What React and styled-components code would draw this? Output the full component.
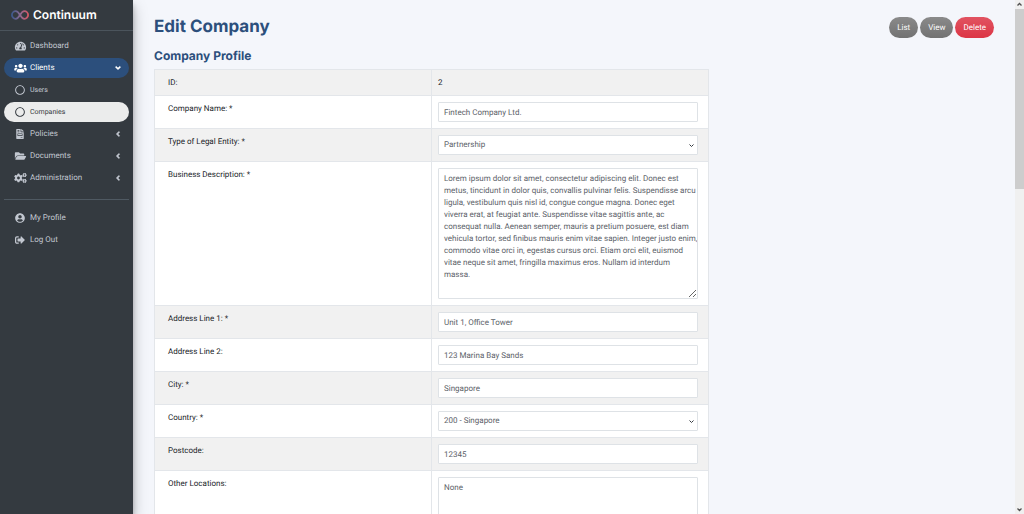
import styled, { createGlobalStyle } from 'styled-components';
import {
  FaTachometerAlt,
  FaUsers,
  FaRegCircle,
  FaFileInvoice,
  FaFolderOpen,
  FaCogs,
  FaUserCircle,
  FaSignOutAlt,
  FaAngleLeft,
  FaAngleDown,
} from 'react-icons/fa';

const GlobalStyle = createGlobalStyle`
  *,
  *::before,
  *::after {
    box-sizing: border-box;
  }

  body {
    margin: 0;
    background: #f4f6fb;
    color: #212529;
    font-family: Roboto, "Liberation Sans", sans-serif;
    font-size: 8px;
    line-height: 12px;
    text-rendering: geometricPrecision;
  }
`;

const Layout = styled.div`
  display: flex;
  height: 100vh;
  overflow: hidden;
`;

const Sidebar = styled.aside`
  flex: none;
  width: 133px;
  background: #343a40;
  box-shadow: 0 7px 14px rgba(0, 0, 0, 0.25), 0 5px 5px rgba(0, 0, 0, 0.22);
`;

const Brand = styled.a`
  display: flex;
  align-items: center;
  gap: 4px;
  height: 31px;
  padding-left: 11px;
  border-bottom: 1px solid #4b545c;
  color: #fff;
  font-family: Inter, "Open Sans", sans-serif;
  font-size: 12px;
  font-weight: 600;
  text-decoration: none;
`;

const Menu = styled.nav`
  display: flex;
  flex-direction: column;
  gap: 2px;
  padding: 5px 4px;
`;

const MenuLink = styled.a`
  display: flex;
  align-items: center;
  height: 20px;
  padding: 0 7px 0 10px;
  border-radius: 10px;
  background: ${({ $variant }) =>
    ({ open: '#2c4f7c', current: '#ebecec' })[$variant] || 'transparent'};
  color: ${({ $variant }) =>
    ({ open: '#fff', current: '#343a40' })[$variant] || '#c2c7d0'};
  font-size: ${({ $sub }) => ($sub ? '7px' : '8px')};
  text-decoration: none;
`;

const MenuIcon = styled.span`
  display: flex;
  justify-content: center;
  width: 12px;
  margin-right: 4px;

  svg {
    flex: none;
    width: ${({ $wide }) => ($wide ? '13px' : '10px')};
    height: 10px;
  }
`;

const MenuText = styled.span`
  flex: 1;
`;

const MenuArrow = styled.span`
  display: flex;

  svg {
    width: auto;
    height: 8px;
    stroke: currentColor;
    stroke-width: 30px;
  }
`;

const Divider = styled.hr`
  width: 100%;
  margin: 9px 0 6px;
  border: 0;
  border-top: 1px solid #4f5962;
`;

const Main = styled.main`
  flex: 1;
  padding: 17px 21px;
`;

const PageHeader = styled.header`
  display: flex;
  align-items: center;
  justify-content: space-between;
  height: 21px;
`;

const Title = styled.h1`
  margin: 0;
  color: #2c4f7c;
  font-family: Inter, "Open Sans", sans-serif;
  font-size: 17px;
  font-weight: 700;
  line-height: 21px;
`;

const Subtitle = styled.h2`
  margin: 10px 0 6px;
  color: #2c4f7c;
  font-family: Inter, "Open Sans", sans-serif;
  font-size: 12px;
  font-weight: 700;
  line-height: 15px;
`;

const Actions = styled.div`
  display: flex;
  gap: 2px;
`;

const ActionButton = styled.button`
  height: 21px;
  padding: 0 8px;
  border: 0;
  border-radius: 11px;
  background: ${({ $danger }) =>
    $danger
      ? 'linear-gradient(#e15361, #dc3545)'
      : 'linear-gradient(#8a8a8a, #727272)'};
  color: #fff;
  font: inherit;
  text-rendering: inherit;
  cursor: pointer;
`;

const ProfileTable = styled.table`
  width: 100%;
  max-width: 555px;
  border: 1px solid #e3e6ea;
  border-collapse: collapse;
  table-layout: fixed;
  background: #fff;
`;

const Row = styled.tr`
  &:nth-child(odd) {
    background: #f1f1f1;
  }
`;

const LabelCell = styled.th`
  padding: 7px 13px 6px;
  border: 1px solid #e3e6ea;
  font-weight: 400;
  text-align: left;
  vertical-align: top;
`;

const ValueCell = styled.td`
  padding: 6px 10px 6px 6px;
  border: 1px solid #e3e6ea;
  vertical-align: top;
`;

const PlainValue = styled.div`
  padding-top: 1px;
`;

const Input = styled.input`
  display: block;
  width: 100%;
  height: 20px;
  padding: 0 5px;
  border: 1px solid #dee2e6;
  border-radius: 1px;
  background: #fff;
  color: #5c6269;
  font: inherit;
  text-rendering: inherit;
`;

const SelectWrap = styled.div`
  position: relative;
`;

const Select = styled.select`
  display: block;
  width: 100%;
  height: 20px;
  padding: 0 5px;
  border: 1px solid #dee2e6;
  border-radius: 1px;
  background: #fff;
  color: #5c6269;
  font: inherit;
  text-rendering: inherit;
  appearance: none;
`;

const SelectArrow = styled.svg`
  position: absolute;
  top: 7px;
  right: 3px;
  width: 7px;
  height: 7px;
  fill: none;
  stroke: #343a40;
  pointer-events: none;
`;

const TextArea = styled.textarea`
  display: block;
  width: 100%;
  height: 131px;
  padding: 4px 0 4px 5px;
  border: 1px solid #dee2e6;
  border-radius: 1px;
  background: #fff;
  color: #5c6269;
  font: inherit;
  text-rendering: inherit;
  white-space: pre;
  overflow: hidden;
  resize: vertical;
`;

const ScrollTrack = styled.div`
  display: flex;
  flex: none;
  flex-direction: column;
  align-items: center;
  width: 9px;
  background: #f0f0f0;
`;

const ScrollThumb = styled.div`
  width: 100%;
  height: 35%;
  margin-bottom: auto;
  background: #cdcdcd;
`;

const ScrollArrow = styled.svg`
  flex: none;
  width: 9px;
  height: 9px;
  fill: none;
  stroke: #505050;
  stroke-width: 1.3;
`;

const description = [
  'Lorem ipsum dolor sit amet, consectetur adipiscing elit. Donec est',
  'metus, tincidunt in dolor quis, convallis pulvinar felis. Suspendisse arcu',
  'ligula, vestibulum quis nisl id, congue congue magna. Donec eget',
  'viverra erat, at feugiat ante. Suspendisse vitae sagittis ante, ac',
  'consequat nulla. Aenean semper, mauris a pretium posuere, est diam',
  'vehicula tortor, sed finibus mauris enim vitae sapien. Integer justo enim,',
  'commodo vitae orci in, egestas cursus orci. Etiam orci elit, euismod',
  'vitae neque sit amet, fringilla maximus eros. Nullam id interdum',
  'massa.',
].join('\n');

const fields = [
  { id: 'name', label: 'Company Name: *', value: 'Fintech Company Ltd.' },
  { id: 'entity', label: 'Type of Legal Entity: *', type: 'select', value: 'Partnership' },
  { id: 'description', label: 'Business Description: *', type: 'textarea', value: description },
  { id: 'address1', label: 'Address Line 1: *', value: 'Unit 1, Office Tower' },
  { id: 'address2', label: 'Address Line 2:', value: '123 Marina Bay Sands' },
  { id: 'city', label: 'City: *', value: 'Singapore' },
  { id: 'country', label: 'Country: *', type: 'select', value: '200 - Singapore' },
  { id: 'postcode', label: 'Postcode:', value: '12345' },
  { id: 'locations', label: 'Other Locations:', type: 'textarea', value: 'None' },
];

const mainMenu = [
  { label: 'Dashboard', icon: FaTachometerAlt, wide: true },
  { label: 'Clients', icon: FaUsers, wide: true, variant: 'open', arrow: FaAngleDown },
  { label: 'Users', icon: FaRegCircle, sub: true },
  { label: 'Companies', icon: FaRegCircle, sub: true, variant: 'current' },
  { label: 'Policies', icon: FaFileInvoice, arrow: FaAngleLeft },
  { label: 'Documents', icon: FaFolderOpen, wide: true, arrow: FaAngleLeft },
  { label: 'Administration', icon: FaCogs, wide: true, arrow: FaAngleLeft },
];

const userMenu = [
  { label: 'My Profile', icon: FaUserCircle },
  { label: 'Log Out', icon: FaSignOutAlt },
];

function Logo() {
  return (
    <svg width="18" height="10" viewBox="0 0 18 10" fill="none" strokeWidth="1.8">
      <defs>
        <linearGradient id="loop" x1="0" x2="18" y1="0" y2="0" gradientUnits="userSpaceOnUse">
          <stop offset="0" stopColor="#35578c" />
          <stop offset="0.5" stopColor="#8a6a92" />
          <stop offset="1" stopColor="#dc5560" />
        </linearGradient>
      </defs>
      <path
        d="M9 5C7.5 2.6 6.4 1.2 4.7 1.2a3.8 3.8 0 0 0 0 7.6C6.4 8.8 7.5 7.4 9 5s2.6-3.8 4.3-3.8a3.8 3.8 0 0 1 0 7.6C11.6 8.8 10.5 7.4 9 5Z"
        stroke="url(#loop)"
      />
    </svg>
  );
}

function MenuItem({ item }) {
  const Icon = item.icon;
  const Arrow = item.arrow;
  return (
    <MenuLink href="#" $variant={item.variant} $sub={item.sub}>
      <MenuIcon $wide={item.wide}>
        <Icon />
      </MenuIcon>
      <MenuText>{item.label}</MenuText>
      {Arrow && (
        <MenuArrow>
          <Arrow />
        </MenuArrow>
      )}
    </MenuLink>
  );
}

function Field({ field }) {
  if (field.type === 'select') {
    return (
      <SelectWrap>
        <Select id={field.id} defaultValue={field.value}>
          <option>{field.value}</option>
        </Select>
        <SelectArrow viewBox="0 0 7 7">
          <path d="M1.5 2.5 3.5 4.5 5.5 2.5" />
        </SelectArrow>
      </SelectWrap>
    );
  }
  if (field.type === 'textarea') {
    return <TextArea id={field.id} defaultValue={field.value} spellCheck={false} />;
  }
  return <Input id={field.id} type="text" defaultValue={field.value} />;
}

export default function App() {
  return (
    <>
      <GlobalStyle />
      <Layout>
        <Sidebar>
          <Brand href="#">
            <Logo />
            Continuum
          </Brand>
          <Menu>
            {mainMenu.map((item) => (
              <MenuItem key={item.label} item={item} />
            ))}
            <Divider />
            {userMenu.map((item) => (
              <MenuItem key={item.label} item={item} />
            ))}
          </Menu>
        </Sidebar>
        <Main>
          <PageHeader>
            <Title>Edit Company</Title>
            <Actions>
              <ActionButton type="button">List</ActionButton>
              <ActionButton type="button">View</ActionButton>
              <ActionButton type="button" $danger>
                Delete
              </ActionButton>
            </Actions>
          </PageHeader>
          <Subtitle>Company Profile</Subtitle>
          <ProfileTable>
            <tbody>
              <Row>
                <LabelCell scope="row">ID:</LabelCell>
                <ValueCell>
                  <PlainValue>2</PlainValue>
                </ValueCell>
              </Row>
              {fields.map((field) => (
                <Row key={field.id}>
                  <LabelCell scope="row">
                    <label htmlFor={field.id}>{field.label}</label>
                  </LabelCell>
                  <ValueCell>
                    <Field field={field} />
                  </ValueCell>
                </Row>
              ))}
            </tbody>
          </ProfileTable>
        </Main>
        <ScrollTrack>
          <ScrollArrow viewBox="0 0 9 9">
            <path d="M2.5 5.5 4.5 3.5 6.5 5.5" />
          </ScrollArrow>
          <ScrollThumb />
          <ScrollArrow viewBox="0 0 9 9">
            <path d="M2.5 3.5 4.5 5.5 6.5 3.5" />
          </ScrollArrow>
        </ScrollTrack>
      </Layout>
    </>
  );
}
